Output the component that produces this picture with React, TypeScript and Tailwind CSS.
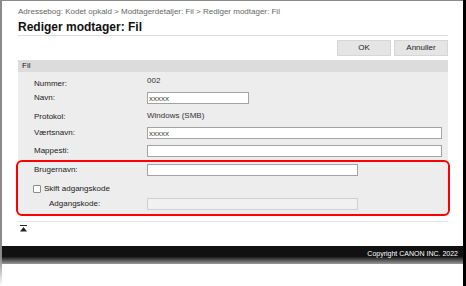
import React from "react";

function Row({
  label,
  className,
  labelClass,
  children,
}: {
  label: React.ReactNode;
  className: string;
  labelClass?: string;
  children?: React.ReactNode;
}) {
  return (
    <div className={`flex items-center ${className}`}>
      <div className={`w-[129px] shrink-0 text-[8px] leading-[10px] text-[#222] ${labelClass ?? "pl-[16px]"}`}>
        {label}
      </div>
      <div className="flex items-center">{children}</div>
    </div>
  );
}

function Field({ w, value, disabled }: { w: string; value?: string; disabled?: boolean }) {
  return (
    <input
      readOnly
      disabled={disabled}
      defaultValue={value ?? ""}
      className={`${w} h-[12px] box-border border p-0 pl-[1px] text-[8px] leading-[10px] outline-none ${
        disabled ? "bg-[#f1f1f1] border-[#cfcfcf]" : "bg-white border-[#a3a3a3] text-[#444]"
      } font-['Liberation_Sans',Arial,sans-serif]`}
    />
  );
}

export default function App() {
  return (
    <div className="w-[466px] h-[286px] bg-white flex overflow-hidden font-['Liberation_Sans',Arial,sans-serif]">
      <div className="w-[2px] h-full shrink-0 bg-[linear-gradient(to_bottom,#8a8a8a_0%,#8a8a8a_90%,#ffffff_100%)]" />
      <div className="w-[461px] shrink-0 flex flex-col border-t border-[#8a8a8a]">
        <div className="pl-[16px] pr-[15px]">
          <div className="mt-[4px] h-[13px] leading-[13px] text-[8px] text-[#666] whitespace-nowrap">
            Adressebog: Kodet opkald &gt; Modtagerdetaljer: Fil &gt; Rediger modtager: Fil
          </div>
          <div className="mt-[2px] h-[16px] border-b border-[#dcdcdc] text-[12px] font-bold leading-[14px] text-[#111] whitespace-nowrap">
            Rediger modtager: Fil
          </div>
          <div className="mt-[4px] flex justify-end gap-[3px]">
            <div className="w-[54px] h-[16px] bg-[#e5e5e5] border border-[#d6d6d6] text-[8px] text-[#222] flex items-center justify-center">
              OK
            </div>
            <div className="w-[54px] h-[16px] bg-[#e5e5e5] border border-[#d6d6d6] text-[8px] text-[#222] flex items-center justify-center">
              Annuller
            </div>
          </div>
          <div className="mt-[4px] h-[12px] bg-[#dcdcdc] pl-[4px] text-[8px] leading-[12px] text-[#222]">Fil</div>
          <div className="bg-[#ededed] pt-[4px]">
            <Row label="Nummer:" className="h-[15px]">
              <span className="mb-[6px] text-[8px] leading-[10px] text-[#333]">002</span>
            </Row>
            <Row label="Navn:" className="mt-[1px] h-[12px]">
              <Field w="w-[102px]" value="xxxxx" />
            </Row>
            <Row label="Protokol:" className="mt-[4px] h-[17px]">
              <span className="mb-[1px] text-[8px] leading-[10px] text-[#333]">Windows (SMB)</span>
            </Row>
            <Row label="Værtsnavn:" className="mt-[2px] h-[12px]">
              <Field w="w-[295px]" value="xxxxx" />
            </Row>
            <Row label="Mappesti:" className="mt-[6px] h-[12px]">
              <Field w="w-[295px]" />
            </Row>
            <div className="mt-[3px] -mx-[2px] -mb-[2px] border-2 border-[#ff0000] rounded-[6px] pb-[4px]">
              <Row label="Brugernavn:" className="mt-[2px] h-[12px]">
                <Field w="w-[211px]" />
              </Row>
              <div className="mt-[6px] h-[14px] flex items-center pl-[15px]">
                <div className="w-[8px] h-[8px] bg-white border border-[#8c8c8c] rounded-[1px]" />
                <span className="ml-[3px] text-[8px] leading-[10px] text-[#222]">Skift adgangskode</span>
              </div>
              <Row label="Adgangskode:" labelClass="pl-[31px]" className="mt-[2px] h-[12px]">
                <Field w="w-[211px]" disabled />
              </Row>
            </div>
          </div>
          <div className="mt-[7px] h-[1px] bg-[#e4e4e4]" />
          <div className="mt-[3px] ml-[2px]">
            <svg width="7" height="7" viewBox="0 0 7 7" className="block">
              <rect x="0" y="0" width="7" height="1" fill="#222" />
              <polygon points="3.5,2 0,6.5 7,6.5" fill="#222" />
            </svg>
          </div>
        </div>
        <div className="mt-[14px] h-[18px] flex justify-end pr-[5px] pt-[3px] text-[7px] leading-[9px] text-white bg-[linear-gradient(to_bottom,#111111_0%,#111111_58%,#9a9a9a_100%)]">
          Copyright CANON INC. 2022
        </div>
      </div>
      <div className="w-[3px] h-full shrink-0 bg-black" />
    </div>
  );
}
